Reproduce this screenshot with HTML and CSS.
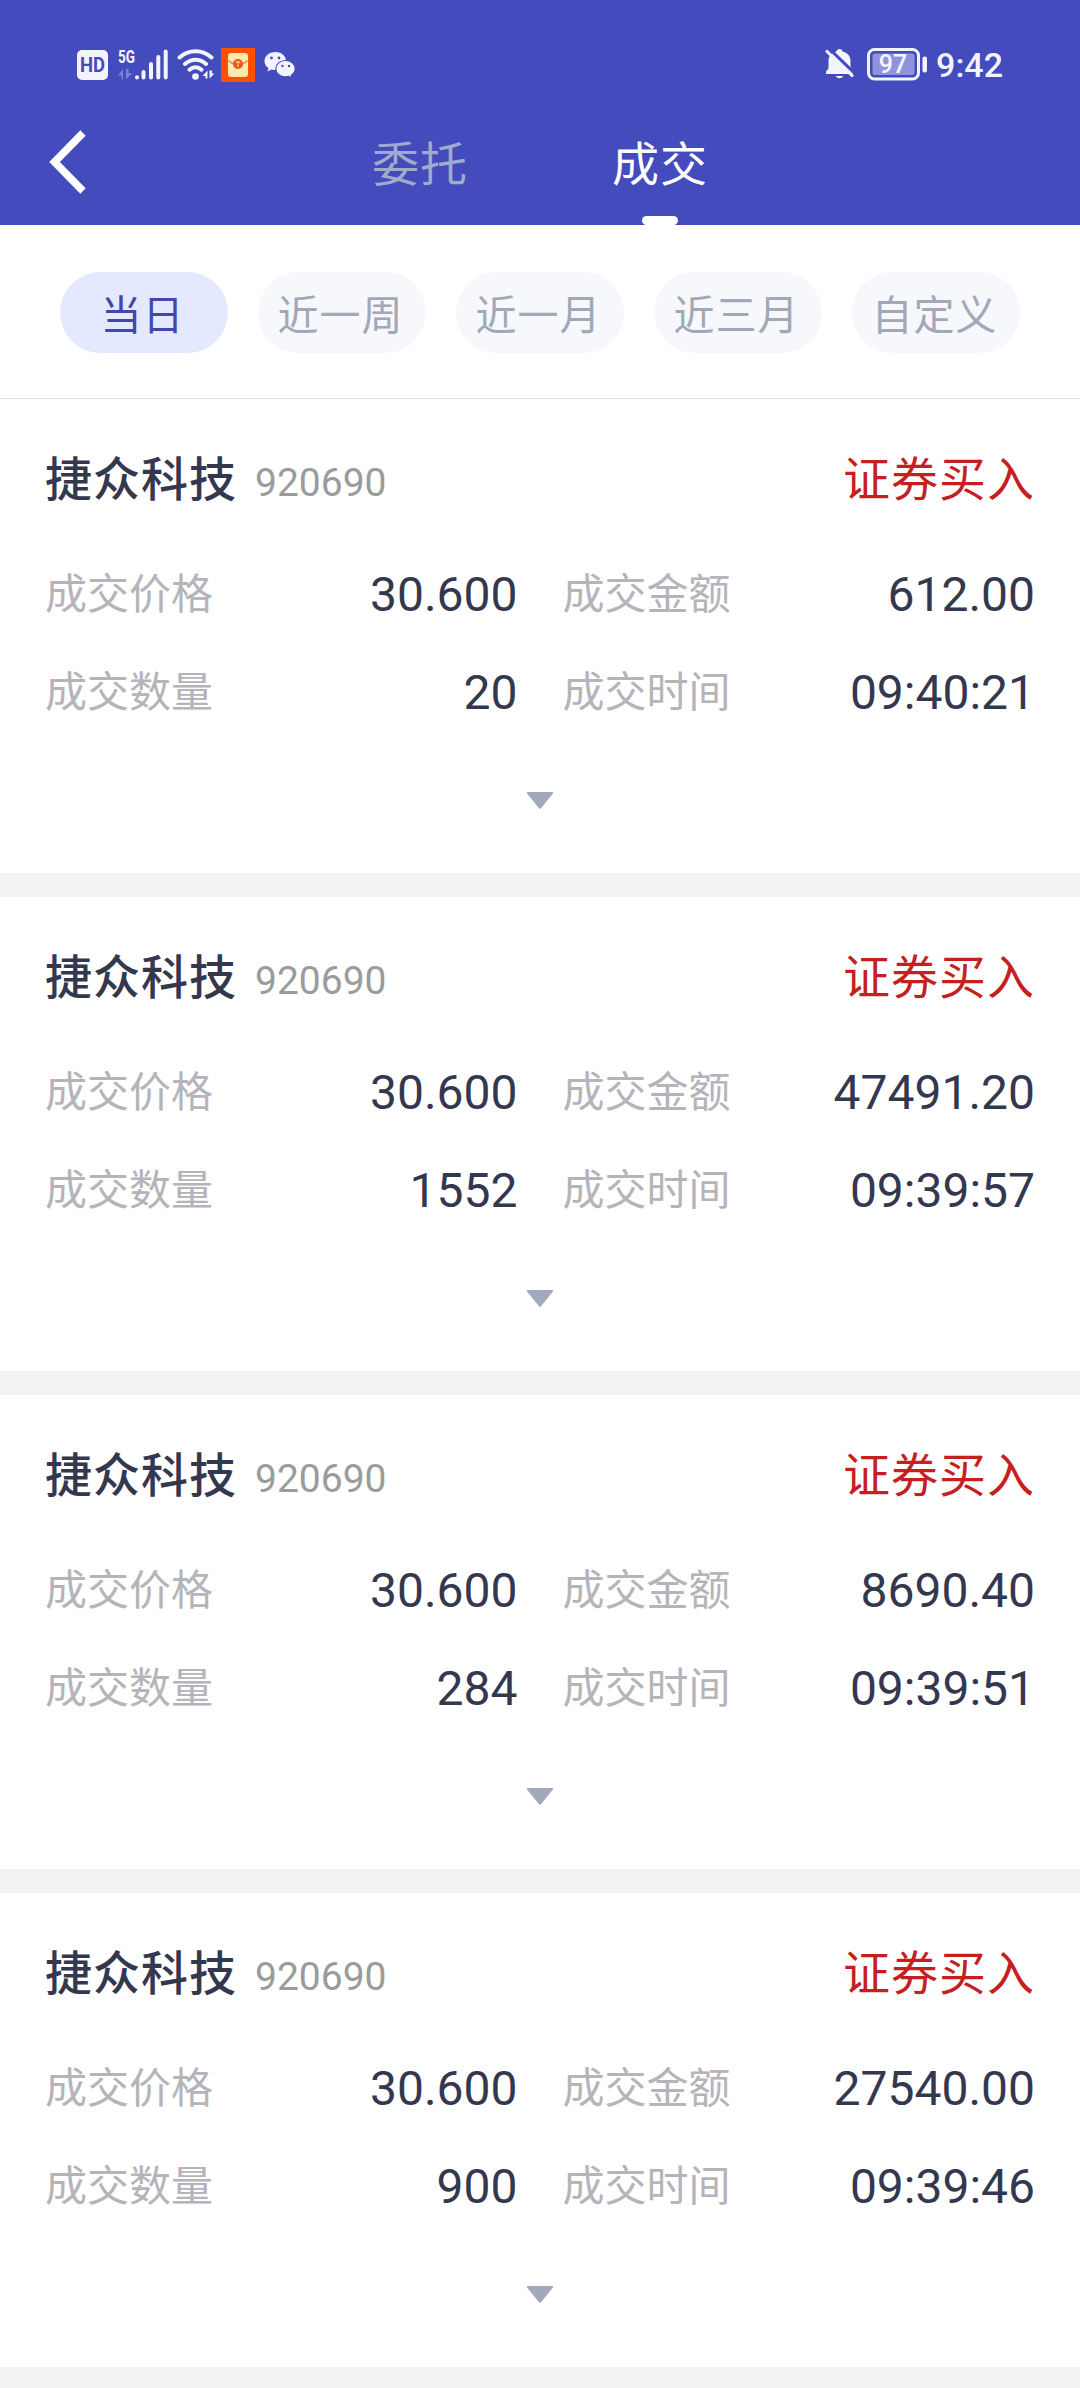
FILE: index.html
```html
<!DOCTYPE html>
<html lang="zh-CN">
<head>
<meta charset="utf-8">
<meta name="viewport" content="width=device-width">
<title>成交</title>
<link rel="stylesheet" href="styles.css">
</head>
<body>
<header class="header">
  <div class="status">
    <div class="status-left">
      <svg class="hd" width="31" height="30" viewBox="0 0 31 30"><rect width="31" height="30" rx="5" fill="#f3f4ff"/><text x="15.500" y="22.300" text-anchor="middle" class="hd-text" textLength="25" lengthAdjust="spacingAndGlyphs">HD</text></svg>
      <svg class="signal" width="52" height="42" viewBox="0 -8 52 42">
        <text x="0" y="14.500" class="net-text" textLength="17" lengthAdjust="spacingAndGlyphs">5G</text>
        <path d="M0 27.500l5-6.500v10.500H3.500v-4zM8 21v10.500l6-6.500h-3.500v-4z" fill="#7c81d6"/>
        <g stroke="#f3f4ff" stroke-width="4" stroke-linecap="round"><path d="M19 29.200v.3M25.500 24v5.500M33 16v13.500M40.300 9v20.500M47.700 3.500v26"/></g>
      </svg>
      <svg class="wifi" width="40" height="33" viewBox="0 0 40 33">
        <g fill="none" stroke="#f3f4ff" stroke-width="4" stroke-linecap="round"><path d="M2.500 9.500C11.500 1 25.500 1 34.500 9.500M8 16c6.200-5.600 15-5.600 21 0M12.500 21.700c3.500-3.300 8.500-3.300 12 0"/></g>
        <circle cx="18.500" cy="28.500" r="3.300" fill="#f3f4ff"/>
        <path d="M25.500 28l5-5.500v8h-2V28zM32.500 22.500v8l5-5h-2.500v-3z" fill="#f3f4ff"/>
      </svg>
      <svg class="packet" width="34" height="34" viewBox="0 0 34 34">
        <rect width="34" height="34" fill="#ff5200"/><rect x="7" y="5" width="20" height="24" rx="3" fill="#ffe9ae"/>
        <path d="M7.500 12.500q9.500 9 19 0" fill="none" stroke="#cf8a45" stroke-width="1.300"/><circle cx="17" cy="16" r="5" fill="#e4581f"/><path d="M14.800 14h4.400M17 14v5" stroke="#ffc27a" stroke-width="1.300"/>
      </svg>
      <svg class="wechat" width="32" height="28" viewBox="0 0 32 28">
        <path d="M11.500 1C5 1 .5 5 .5 10c0 3 1.500 5.400 4 7l-1 3.500 4-2c1.200.4 2.500.6 4 .6C17.500 19 22 15 22 10S17.500 1 11.500 1z" fill="#f3f4ff"/>
        <path d="M21.500 9.500c-5.500 0-9.700 3.700-9.700 8.200s4.200 8.200 9.700 8.200c1.200 0 2.300-.2 3.400-.5l3.100 1.800-.8-3c2.400-1.500 4-3.800 4-6.500 0-4.500-4.200-8.200-9.700-8.200z" fill="#f3f4ff" stroke="#434bbd" stroke-width="1.200"/>
        <g fill="#434bbd"><circle cx="7.500" cy="7" r="1.400"/><circle cx="15" cy="7" r="1.400"/><circle cx="18.500" cy="15" r="1.200"/><circle cx="25" cy="15" r="1.200"/></g>
      </svg>
    </div>
    <div class="status-right">
      <svg class="bell" width="30" height="32" viewBox="0 0 30 32">
        <path d="M1 26v-2.500l2.500-3V13c0-5 3-8.500 8-9.500C12 .3 17 .3 17.500 3.500c5 1 8 4.500 8 9.500v7.500l2.500 3V26z" fill="#f3f4ff"/><path d="M11 28h7c-.5 3-6.500 3-7 0z" fill="#f3f4ff"/>
        <path d="M2.500-1l29 28" stroke="#434bbd" stroke-width="3"/><path d="M1 2.500l27 26" stroke="#f3f4ff" stroke-width="3"/>
      </svg>
      <svg class="battery" width="61" height="33" viewBox="0 0 61 33">
        <rect x="1.500" y="1.500" width="50" height="29.500" rx="6" fill="none" stroke="#f3f4ff" stroke-width="3"/><rect x="5.500" y="5.500" width="42" height="21.500" rx="2.500" fill="#9093dc"/>
        <rect x="55.500" y="8.500" width="4.500" height="16" rx="2" fill="#f3f4ff"/><text x="26" y="25" text-anchor="middle" class="battery-text">97</text>
      </svg>
      <span class="clock">9:42</span>
    </div>
  </div>
  <nav class="nav">
    <svg class="back" width="40" height="66" viewBox="0 0 40 66"><path d="M35 4L6.500 33 35 62" fill="none" stroke="#fff" stroke-width="7.500"/></svg>
    <div class="tabs"><span class="tab">委托</span><span class="tab tab-active">成交</span></div>
  </nav>
</header>
<div class="filters">
  <span class="chip chip-active">当日</span><span class="chip">近一周</span><span class="chip">近一月</span><span class="chip">近三月</span><span class="chip">自定义</span>
</div>
<main class="list">
  <section class="card">
    <div class="card-head"><h2 class="name">捷众科技</h2><span class="code">920690</span><span class="side">证券买入</span></div>
    <dl class="fields">
      <div class="field"><dt>成交价格</dt><dd>30.600</dd></div><div class="field"><dt>成交金额</dt><dd>612.00</dd></div>
      <div class="field"><dt>成交数量</dt><dd>20</dd></div><div class="field"><dt>成交时间</dt><dd>09:40:21</dd></div>
    </dl>
    <svg class="more" width="28" height="17" viewBox="0 0 28 17"><path d="M2 0h24q2 0 .8 1.800L15 16.200q-1 1.200-2 0L1.200 1.800Q0 0 2 0z"/></svg>
  </section>
  <section class="card">
    <div class="card-head"><h2 class="name">捷众科技</h2><span class="code">920690</span><span class="side">证券买入</span></div>
    <dl class="fields">
      <div class="field"><dt>成交价格</dt><dd>30.600</dd></div><div class="field"><dt>成交金额</dt><dd>47491.20</dd></div>
      <div class="field"><dt>成交数量</dt><dd>1552</dd></div><div class="field"><dt>成交时间</dt><dd>09:39:57</dd></div>
    </dl>
    <svg class="more" width="28" height="17" viewBox="0 0 28 17"><path d="M2 0h24q2 0 .8 1.800L15 16.200q-1 1.200-2 0L1.200 1.800Q0 0 2 0z"/></svg>
  </section>
  <section class="card">
    <div class="card-head"><h2 class="name">捷众科技</h2><span class="code">920690</span><span class="side">证券买入</span></div>
    <dl class="fields">
      <div class="field"><dt>成交价格</dt><dd>30.600</dd></div><div class="field"><dt>成交金额</dt><dd>8690.40</dd></div>
      <div class="field"><dt>成交数量</dt><dd>284</dd></div><div class="field"><dt>成交时间</dt><dd>09:39:51</dd></div>
    </dl>
    <svg class="more" width="28" height="17" viewBox="0 0 28 17"><path d="M2 0h24q2 0 .8 1.800L15 16.200q-1 1.200-2 0L1.200 1.800Q0 0 2 0z"/></svg>
  </section>
  <section class="card">
    <div class="card-head"><h2 class="name">捷众科技</h2><span class="code">920690</span><span class="side">证券买入</span></div>
    <dl class="fields">
      <div class="field"><dt>成交价格</dt><dd>30.600</dd></div><div class="field"><dt>成交金额</dt><dd>27540.00</dd></div>
      <div class="field"><dt>成交数量</dt><dd>900</dd></div><div class="field"><dt>成交时间</dt><dd>09:39:46</dd></div>
    </dl>
    <svg class="more" width="28" height="17" viewBox="0 0 28 17"><path d="M2 0h24q2 0 .8 1.800L15 16.200q-1 1.200-2 0L1.200 1.800Q0 0 2 0z"/></svg>
  </section>
</main>
</body>
</html>
```
FILE: styles.css
```css
* { box-sizing: border-box; }
body {
  margin: 0;
  min-height: 2388px;
  background: #f3f3f3;
  color: #34384f;
  font-family: Roboto, "Noto Sans CJK SC", sans-serif;
}
svg { display: block; flex: none; }
.header { height: 225px; background: #434bbd; color: #fff; }
.status {
  display: flex;
  justify-content: space-between;
  height: 100px;
  padding: 48px 77px 0 77px;
}
.status-left, .status-right { display: flex; align-items: flex-start; }
.hd { margin-top: 2px; }
.signal { margin: -8px 0 0 10px; }
.wifi { margin-left: 7px; }
.packet { margin-left: 4px; }
.wechat { margin: 3px 0 0 9px; }
.hd-text { font: 700 20px Roboto, sans-serif; fill: #434bbd; }
.net-text { font: 700 18px Roboto, sans-serif; fill: #f3f4ff; }
.battery { margin-left: 12px; }
.battery-text { font: 500 25px Roboto, sans-serif; fill: #f3f4ff; }
.clock {
  margin-left: 8px;
  color: #f3f4ff;
  font-size: 34px;
  font-weight: 500;
  line-height: 34px;
}
.nav { display: flex; height: 125px; padding-left: 48px; }
.back { margin-top: 29px; }
.tabs { display: flex; margin-left: 212px; }
.tab {
  display: flex;
  flex-direction: column;
  align-items: center;
  justify-content: space-between;
  width: 240px;
  padding-top: 30px;
  color: #a0aacb;
  font-size: 47px;
  letter-spacing: 1px;
  line-height: 70px;
}
.tab-active { color: #fff; }
.tab-active::after {
  width: 36px;
  height: 9px;
  border-radius: 5px;
  background: #fff;
  content: "";
}
.filters {
  display: flex;
  gap: 30px;
  height: 174px;
  padding: 47px 60px 0;
  border-bottom: 1px solid #e4e5e7;
  background: #fff;
}
.chip {
  width: 168px;
  height: 81px;
  padding-right: 3px;
  border-radius: 41px;
  background: #f6f8fc;
  color: #a3a8b9;
  font-size: 41px;
  letter-spacing: 1px;
  line-height: 88px;
  text-align: center;
}
.chip-active { background: #e4e9ff; color: #4348a8; }
.list { display: flex; flex-direction: column; gap: 24px; }
.card { height: 474px; padding: 45px 45px 0; background: #fff; }
.card-head {
  display: flex;
  align-items: baseline;
  height: 102px;
  line-height: 72px;
}
.name { margin: 0; font-size: 47px; font-weight: 500; letter-spacing: 1px; }
.code { margin-left: 18px; color: #9b9b9b; font-size: 39px; }
.side { margin-left: auto; color: #c61f1f; font-size: 47px; letter-spacing: 1px; }
.fields {
  display: grid;
  grid-template-columns: 1fr 1fr;
  grid-auto-rows: 98px;
  column-gap: 45px;
  margin: 0;
}
.field { display: flex; align-items: center; justify-content: space-between; }
dt { color: #b4b4ba; font-size: 42px; line-height: 60px; }
dd { margin: 0; font-size: 48px; line-height: 60px; }
.more { margin: 50px auto 0; fill: #a2a9bb; }
```
